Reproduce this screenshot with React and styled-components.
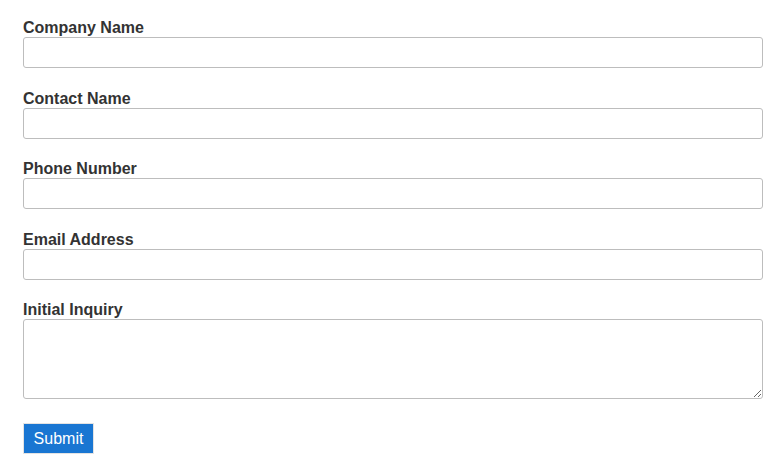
import React from "react";
import styled, { createGlobalStyle } from "styled-components";

const GlobalStyle = createGlobalStyle`
  body {
    margin: 0;
    background: #ffffff;
    font-family: "Liberation Sans", Arial, sans-serif;
  }
`;

const Form = styled.form`
  display: flex;
  flex-direction: column;
  padding: 18px 21px 0 23px;
`;

const Field = styled.div`
  display: flex;
  flex-direction: column;
  margin-bottom: ${(p) => (p.last ? "24px" : "20.5px")};
`;

const Label = styled.label`
  font-size: 16px;
  font-weight: bold;
  line-height: 19px;
  color: #333333;
`;

const Input = styled.input`
  box-sizing: border-box;
  height: 31px;
  width: 100%;
  border: 1px solid #bdbdbd;
  border-radius: 3px;
  padding: 4px 8px;
  font: inherit;
  outline: none;
`;

const TextArea = styled.textarea`
  box-sizing: border-box;
  height: 80px;
  width: 100%;
  border: 1px solid #bdbdbd;
  border-radius: 3px;
  padding: 4px 8px;
  font: inherit;
  outline: none;
  resize: vertical;
`;

const Button = styled.button`
  align-self: flex-start;
  box-sizing: border-box;
  width: 71px;
  height: 31px;
  background: #1976d2;
  color: #ffffff;
  border: 1px solid #e3e3e3;
  font-family: "Liberation Sans", Arial, sans-serif;
  font-size: 16px;
  padding: 0;
  cursor: pointer;
`;

const fields = ["Company Name", "Contact Name", "Phone Number", "Email Address"];

export default function App() {
  return (
    <>
      <GlobalStyle />
      <Form onSubmit={(e) => e.preventDefault()}>
        {fields.map((f) => (
          <Field key={f}>
            <Label>{f}</Label>
            <Input type="text" />
          </Field>
        ))}
        <Field last>
          <Label>Initial Inquiry</Label>
          <TextArea />
        </Field>
        <Button type="submit">Submit</Button>
      </Form>
    </>
  );
}
